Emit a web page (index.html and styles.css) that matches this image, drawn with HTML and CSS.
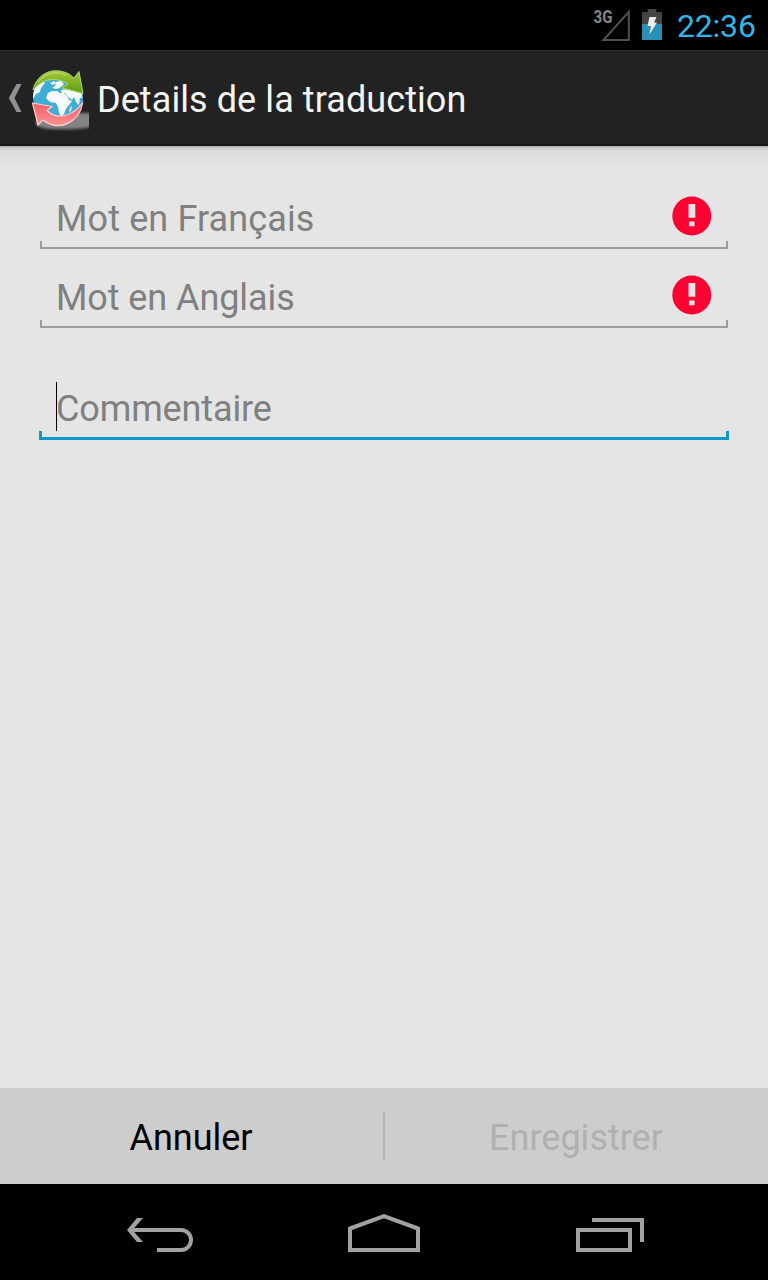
FILE: index.html
```html
<!DOCTYPE html>
<html lang="fr">
<head>
<meta charset="utf-8">
<title>Details de la traduction</title>
<link rel="stylesheet" href="styles.css">
</head>
<body>
<div class="screen">
  <div class="status-bar">
    <svg class="signal" width="38" height="50" viewBox="0 0 38 50">
      <path d="M11.500 40H36.800V11.800Z" fill="none" stroke="#505050" stroke-width="2"/>
      <text class="network" x="1.500" y="23" textLength="19" lengthAdjust="spacingAndGlyphs">3G</text>
    </svg>
    <svg class="battery" width="20" height="50" viewBox="0 0 20 50">
      <path d="M0 12h5.500V9h9v3H20v12H0z" fill="#444"/>
      <path d="M0 24h20v16H0z" fill="#2c8fb4"/>
      <path d="M7.500 17h7l-2.500 5.500H15L7.500 34.500L9 26H5.500z" fill="#eee"/>
    </svg>
    <span class="clock">22:36</span>
  </div>
  <header class="action-bar">
    <svg class="up" width="14" height="30" viewBox="0 0 14 30"><path d="M8.500 1H13.500L6.500 15L13.500 29H8.500L0.800 15Z" fill="#919191"/></svg>
    <svg class="logo" width="64" height="64" viewBox="0 0 64 64">
      <defs>
        <linearGradient id="green" x1="0" y1="0" x2="0" y2="1"><stop offset="0" stop-color="#a0c93a"/><stop offset="1" stop-color="#5f9d12"/></linearGradient>
        <linearGradient id="red" x1="0" y1="0" x2="0" y2="1"><stop offset="0" stop-color="#f0616a"/><stop offset="1" stop-color="#ff8f91"/></linearGradient>
        <filter id="soft"><feGaussianBlur stdDeviation="1.500"/></filter>
        <clipPath id="edge"><path d="M0 0H61V64H0z"/></clipPath>
        <clipPath id="globe"><circle cx="29.500" cy="29.500" r="24.500"/></clipPath>
      </defs>
      <g clip-path="url(#edge)"><path d="M42 45H66V58Q54 62 24 61Q6 60 8 53Z" fill="#848484" filter="url(#soft)"/></g>
      <circle cx="30" cy="29.500" r="25" fill="#3fadd6"/>
      <g clip-path="url(#globe)" fill="#f5fbfd">
        <path d="M3 28L6 18L14 13L17 15L13 20L12 24L8 26L5 31Z"/>
        <path d="M22 15L26 13L28 15L25 17ZM28 14L33 13L36 16L33 19L29 21L24 20L27 18Z"/>
        <path d="M20 25L24 23H29L32 25H36L39 28L41 32L44 33L41 37L38 41L36 46L33 48L31 45L30 39L28 35L22 34L18 30Z"/>
        <path d="M33 22L40 21L54 24L55 30L52 30L51 37L48 34L46 29L44 32L40 29L37 25L34 25Z"/>
        <path d="M42 40L44 38L43 43L41 44Z"/>
      </g>
      <path d="M5 22C8 8 23-3 41 6L46 10L51 3.500L55 25.500L34 20L40 16C27 8 14 11 5 22Z" fill="url(#green)" stroke="#b3d86c" stroke-width="1"/>
      <path d="M10 14Q22 0 38 7" fill="none" stroke="#cde47f" stroke-width="1.500" opacity=".6"/>
      <path d="M4.500 35L24 38.500L19 42.500C28 52 44 49 54.500 35C52 53 32 65 15 52L10 57Z" fill="url(#red)" stroke="#ffd2d1" stroke-width="1.200"/>
    </svg>
    <h1 class="title">Details de la traduction</h1>
  </header>
  <main class="content">
    <div class="field">
      <span class="hint hint-french">Mot en Français</span>
      <svg class="error" width="40" height="40" viewBox="0 0 40 40"><circle cx="19.800" cy="20" r="19.500" fill="#ff0033"/><path d="M16.500 8h6.800v13.700h-6.800zM17 25.500h5.500v4.700H17z" fill="#e5e5e5"/></svg>
    </div>
    <div class="field">
      <span class="hint hint-english">Mot en Anglais</span>
      <svg class="error" width="40" height="40" viewBox="0 0 40 40"><circle cx="19.800" cy="20" r="19.500" fill="#ff0033"/><path d="M16.500 8h6.800v13.700h-6.800zM17 25.500h5.500v4.700H17z" fill="#e5e5e5"/></svg>
    </div>
    <div class="field focused">
      <span class="caret"></span>
      <span class="hint hint-comment">Commentaire</span>
    </div>
  </main>
  <footer class="buttons">
    <div class="button cancel">Annuler</div>
    <div class="divider"></div>
    <div class="button save">Enregistrer</div>
  </footer>
  <nav class="nav-bar">
    <svg width="68" height="40" viewBox="0 0 68 40"><path d="M7 14H57a10 10 0 0 1 0 20H33" fill="none" stroke="#a2a2a2" stroke-width="4"/><path d="M13 2h6L8.500 14L19 26H13L3 14Z" fill="#a2a2a2"/></svg>
    <svg width="72" height="40" viewBox="0 0 72 40"><path d="M2 34V12.500L36 0.200L70 12.500V34Z" fill="none" stroke="#a2a2a2" stroke-width="4"/></svg>
    <svg width="68" height="40" viewBox="0 0 68 40"><path d="M2 14H54V34H2ZM16 4H66V26" fill="none" stroke="#a2a2a2" stroke-width="4"/></svg>
  </nav>
</div>
</body>
</html>
```
FILE: styles.css
```css
body {
  margin: 0;
  background: #000;
  font-family: Roboto, sans-serif;
  font-size: 36px;
}

svg {
  display: block;
  flex: none;
}

.screen {
  display: flex;
  flex-direction: column;
  width: 768px;
  height: 1280px;
  overflow: hidden;
}

.status-bar {
  display: flex;
  justify-content: flex-end;
  height: 50px;
  padding-right: 12px;
  background: #000;
}

.signal {
  margin-right: 12px;
}

.network {
  fill: #858585;
  font-size: 18px;
  font-weight: 700;
}

.clock {
  width: 79px;
  margin-left: 15px;
  color: #33b5e5;
  font-size: 32px;
  letter-spacing: -0.2px;
  line-height: 52px;
  white-space: nowrap;
}

.action-bar {
  display: flex;
  align-items: center;
  box-sizing: border-box;
  height: 96px;
  padding-left: 8px;
  border-top: 1px solid #2e2e2e;
  border-bottom: 2px solid #161616;
  background: #222;
}

.logo {
  margin: 4px 0 0 6px;
}

.title {
  margin: 4px 0 0 5px;
  color: #f5f5f5;
  font-size: 36px;
  font-weight: 400;
  letter-spacing: 0.08px;
  line-height: 48px;
  white-space: nowrap;
}

.content {
  flex: 1;
  box-sizing: border-box;
  padding: 43px 40px 0;
  background: linear-gradient(#a8a8a8, #cecece 2px, #dadada 5px, #e0e0e0 11px, #e5e5e5 20px);
}

.field {
  display: flex;
  align-items: center;
  justify-content: space-between;
  box-sizing: border-box;
  height: 60px;
  margin-bottom: 19px;
  padding: 0 16px 6px;
  background:
    linear-gradient(#9c9c9c, #9c9c9c) left bottom / 2px 8px no-repeat,
    linear-gradient(#9c9c9c, #9c9c9c) right bottom / 2px 8px no-repeat,
    linear-gradient(#9c9c9c, #9c9c9c) left bottom / 100% 2px no-repeat;
}

.hint {
  padding-top: 7px;
  color: #808080;
  line-height: 49px;
  white-space: nowrap;
}

.hint-french {
  letter-spacing: 0.12px;
}

.hint-english {
  letter-spacing: -0.08px;
}

.hint-comment {
  padding-top: 5px;
  letter-spacing: -0.12px;
}

.field.focused {
  justify-content: flex-start;
  height: 61px;
  margin: 51px -1px 0;
  padding: 0 17px 6px;
  background:
    linear-gradient(#0d98c9, #0d98c9) left bottom / 3px 9px no-repeat,
    linear-gradient(#0d98c9, #0d98c9) right bottom / 3px 9px no-repeat,
    linear-gradient(#0d98c9, #0d98c9) left bottom / 100% 3px no-repeat;
}

.caret {
  width: 1px;
  height: 49px;
  margin: 0 -1px 0 0;
  background: #000;
}

.buttons {
  display: flex;
  align-items: center;
  height: 96px;
  background: #cdcdcd;
}

.button {
  flex: 1;
  padding: 3px 1px 0 0;
  line-height: 48px;
  text-align: center;
}

.cancel {
  color: #000;
}

.save {
  color: #b0b0b0;
}

.divider {
  width: 2px;
  height: 48px;
  background: #b5b5b5;
}

.nav-bar {
  display: flex;
  justify-content: space-between;
  box-sizing: border-box;
  height: 96px;
  padding: 32px 124px 0;
  background: #000;
}

.nav-bar svg {
  overflow: visible;
}
```
